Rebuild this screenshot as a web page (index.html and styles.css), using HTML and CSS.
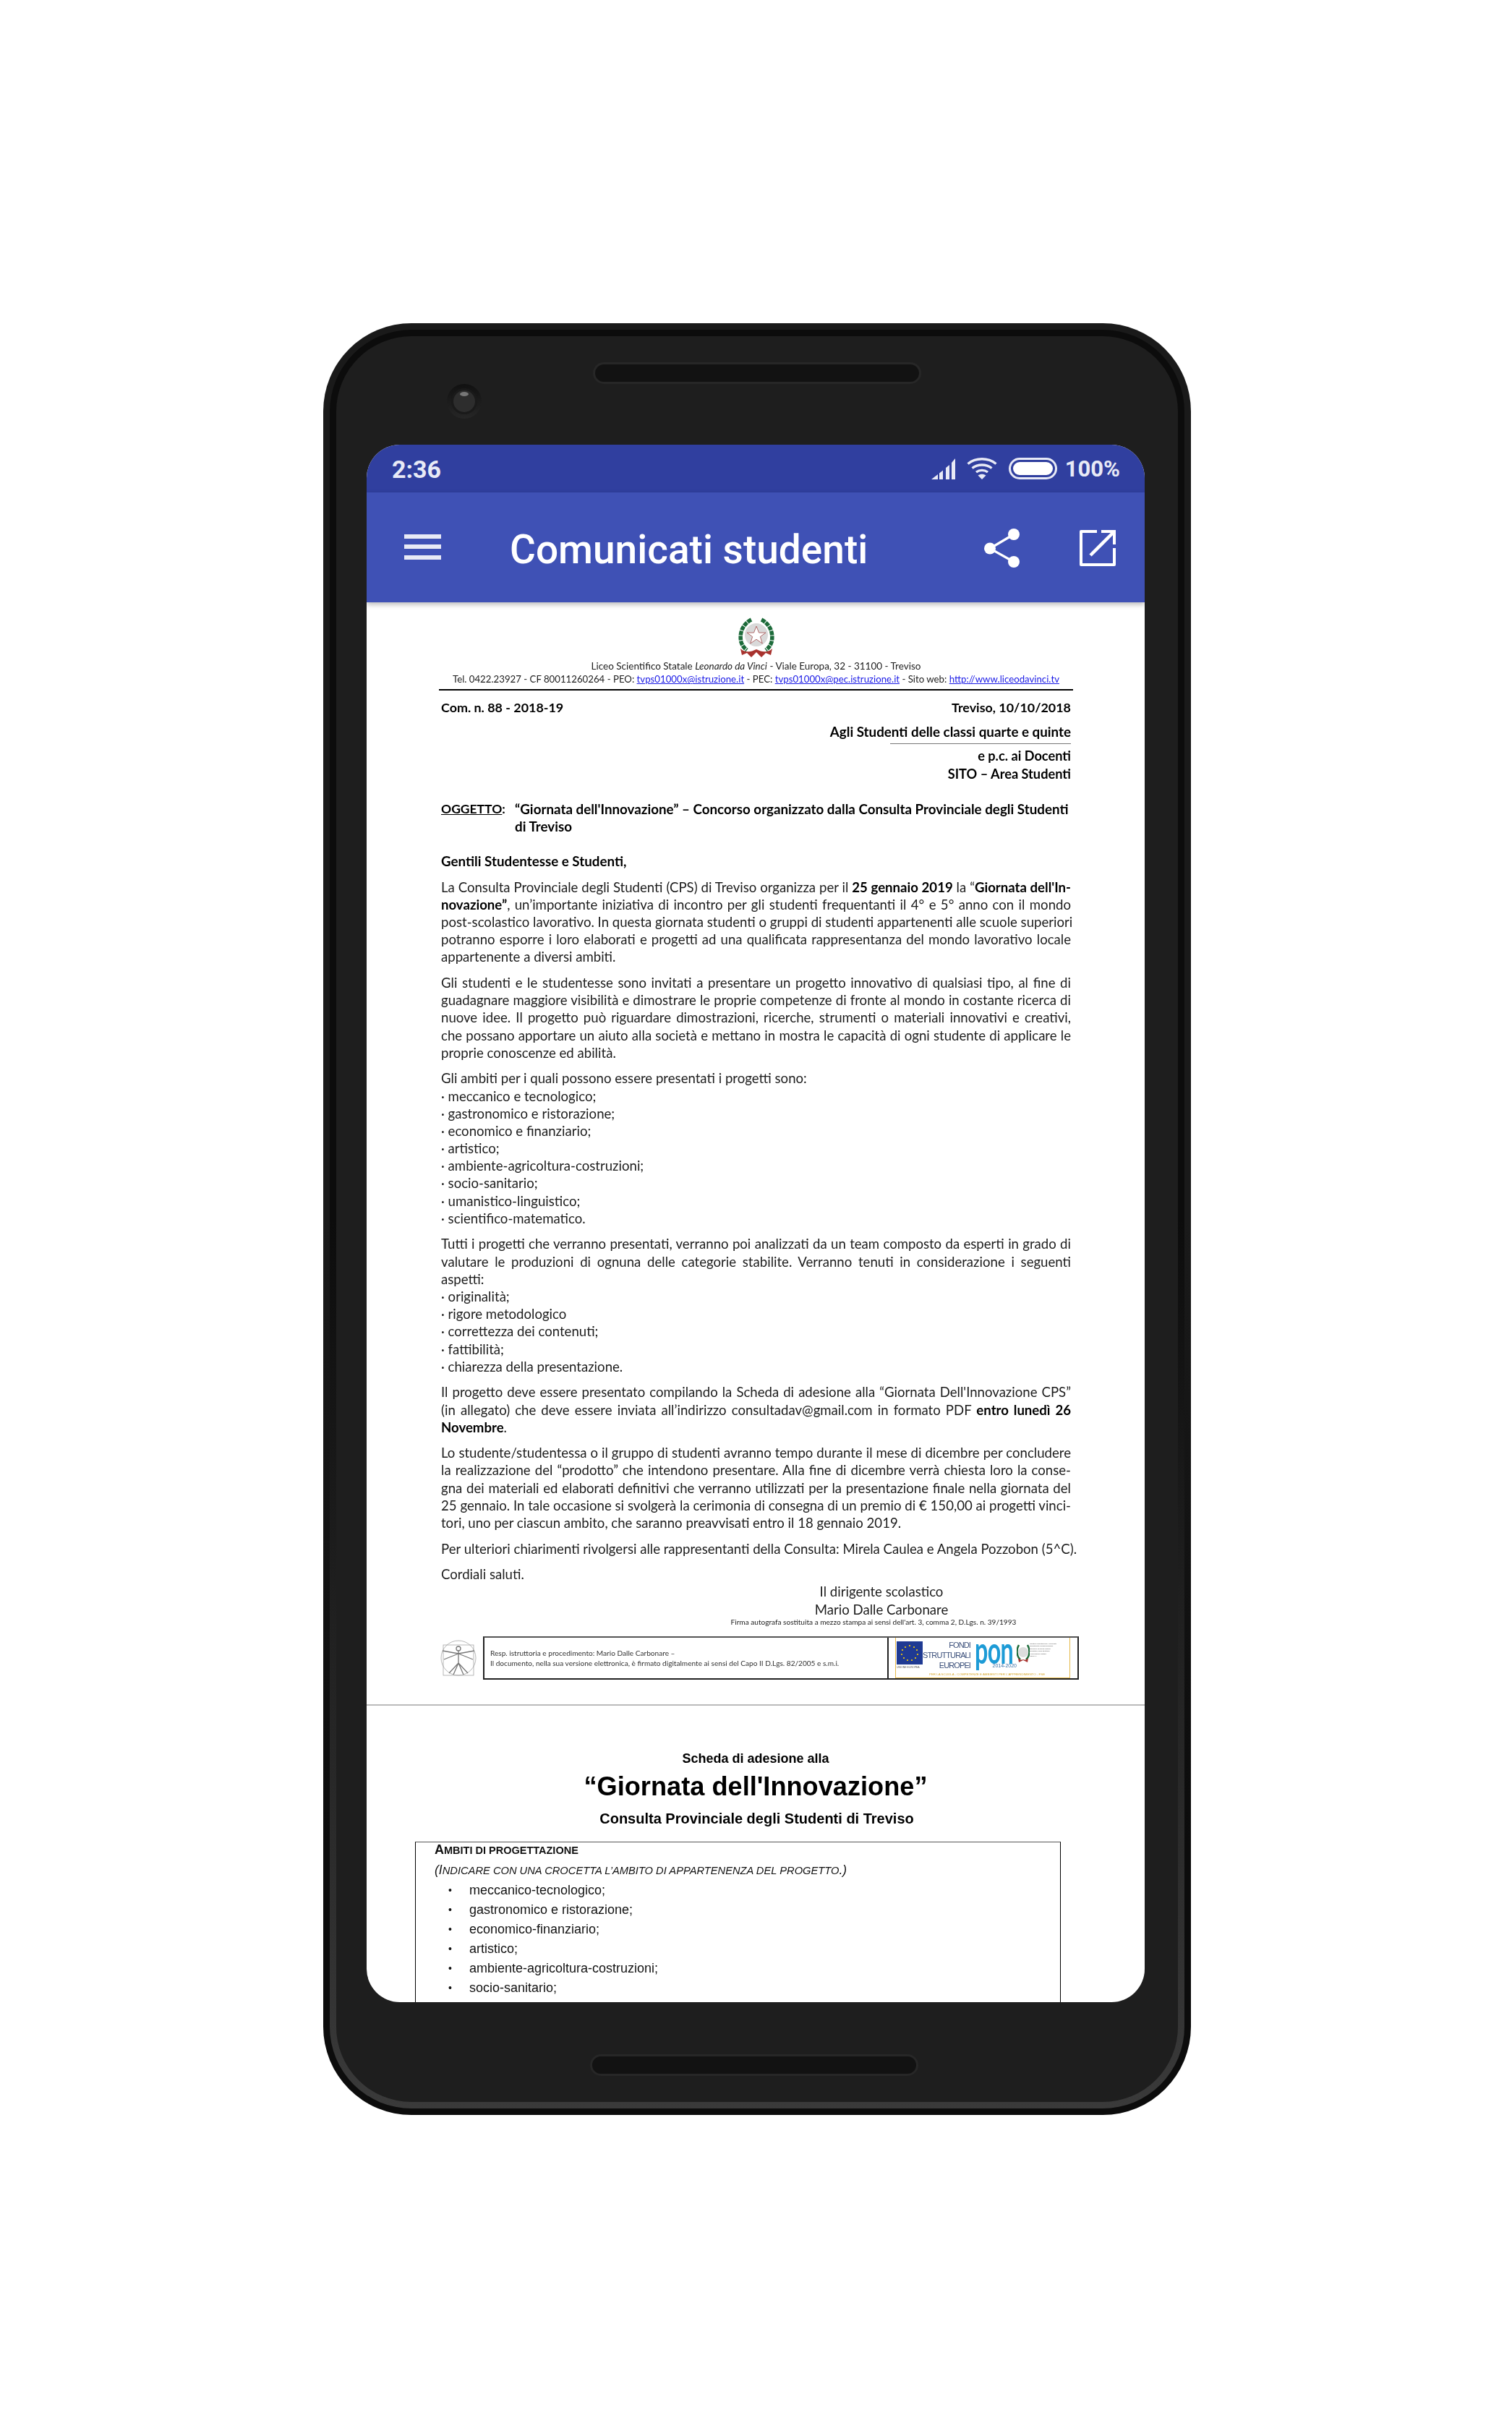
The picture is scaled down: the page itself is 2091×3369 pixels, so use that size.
FILE: index.html
```html
<!DOCTYPE html>
<html lang="it">
<head>
<meta charset="utf-8">
<title>Comunicati studenti</title>
<link rel="stylesheet" href="styles.css">
</head>
<body>
<div class="phone">
  <div class="phone-mid">
    <div class="phone-inner">
      <div class="bezel-top">
        <div class="camera"><div class="lens"></div></div>
        <div class="speaker"></div>
      </div>
      <div class="screen">
        <div class="statusbar">
          <span class="time">2:36</span>
          <div class="status-right">
            <svg class="ic-signal" viewBox="0 0 33 29"><path d="M0 29L9 22V29Z M11 20.500L16 16.500V29H11Z M20 13L25 9V29H20Z M28 6L33 0V29H28Z" fill="#e8eaf6"/></svg>
            <svg class="ic-wifi" viewBox="0 0 42 30"><g fill="none" stroke="#e8eaf6" stroke-width="3.400"><path d="M1.500 8.500C12.500-.5 29.500-.5 40.500 8.500"/><path d="M7.500 14.500C15 8.500 27 8.500 34.500 14.500"/><path d="M13 20C17.500 16.500 24.500 16.500 29 20"/></g><path d="M21 30L15.500 24.500C19 22 23 22 26.500 24.500Z" fill="#e8eaf6"/></svg>
            <div class="battery"><div class="battery-fill"></div></div>
            <span class="pct">100%</span>
          </div>
        </div>
        <div class="appbar">
          <div class="hamburger"><i></i><i></i><i></i></div>
          <h1 class="title">Comunicati studenti</h1>
          <svg class="ic-share" viewBox="0 0 50 54"><g fill="#fff"><circle cx="41" cy="8" r="8"/><circle cx="8" cy="27.500" r="8"/><circle cx="41" cy="46" r="8"/></g><path d="M41 8L8 27.500L41 46" fill="none" stroke="#fff" stroke-width="3.200"/></svg>
          <svg class="ic-open" viewBox="0 0 50 50"><path d="M24 2H2V48H48V25" fill="none" stroke="#fff" stroke-width="4" stroke-linejoin="round"/><path d="M15 35L46 4" stroke="#fff" stroke-width="4.500" fill="none"/><path d="M30 0H50V20H46V4H30Z" fill="#fff"/></svg>
        </div>
        <div class="doc">
          <div class="page">
            <svg class="emblem" viewBox="0 0 50 56">
              <circle cx="25" cy="24" r="16" fill="#d9d9d9"/>
              <path d="M25 12l3.500 9h9.500l-7.600 5.600 2.900 9.400-8.300-5.800-8.300 5.800 2.900-9.400L12 21h9.500z" fill="#fff" stroke="#b06a6a" stroke-width="1"/>
              <path d="M18 3C6 9 1 22 4 34c1.500 5 4 8 8 11" fill="none" stroke="#1d6b3a" stroke-width="5.500" stroke-dasharray="6 1"/>
              <path d="M32 3C44 9 49 22 46 34c-1.500 5-4 8-8 11" fill="none" stroke="#1d6b3a" stroke-width="5.500" stroke-dasharray="6 1"/>
              <path d="M3 43c6 6 14 5 22 1 8 4 16 5 22-1l-2 9-7-3-6 6-7-7-7 7-6-6-7 3z" fill="#a8322e"/>
            </svg>
            <div class="head-line">Liceo Scientifico Statale <em>Leonardo da Vinci</em> - Viale Europa, 32 - 31100 - Treviso</div>
            <div class="head-line head-contact">Tel. 0422.23927 - CF 80011260264 - PEO: <a>tvps01000x@istruzione.it</a> - PEC: <a>tvps01000x@pec.istruzione.it</a> - Sito web: <a>http://www.liceodavinci.tv</a></div>
            <div class="head-rule"></div>
            <div class="ln b split date-row"><span>Com. n. 88 - 2018-19</span><span>Treviso, 10/10/2018</span></div>
            <div class="ln b right gap-agli">Agli Studenti delle classi quarte e quinte</div>
            <div class="thin-rule"></div>
            <div class="ln b right small-b">e p.c. ai Docenti</div>
            <div class="ln b right small-b">SITO – Area Studenti</div>
            <div class="ln b split-obj gap-obj"><span class="obj-label"><u>OGGETTO</u>:</span><span class="obj-text">“Giornata dell'Innovazione” – Concorso organizzato dalla Consulta Provinciale degli Studenti</span></div>
            <div class="ln b obj-cont">di Treviso</div>
            <div class="ln b gap-gent">Gentili Studentesse e Studenti,</div>

            <div class="para">
              <div class="ln j">La Consulta Provinciale degli Studenti (CPS) di Treviso organizza per il <b>25 gennaio 2019</b> la “<b>Giornata dell'In-</b></div>
              <div class="ln j"><b>novazione”</b>, un’importante iniziativa di incontro per gli studenti frequentanti il 4° e 5° anno con il mondo</div>
              <div class="ln j">post-scolastico lavorativo. In questa giornata studenti o gruppi di studenti appartenenti alle scuole superiori</div>
              <div class="ln j">potranno esporre i loro elaborati e progetti ad una qualificata rappresentanza del mondo lavorativo locale</div>
              <div class="ln">appartenente a diversi ambiti.</div>
            </div>
            <div class="para">
              <div class="ln j">Gli studenti e le studentesse sono invitati a presentare un progetto innovativo di qualsiasi tipo, al fine di</div>
              <div class="ln j">guadagnare maggiore visibilità e dimostrare le proprie competenze di fronte al mondo in costante ricerca di</div>
              <div class="ln j">nuove idee. Il progetto può riguardare dimostrazioni, ricerche, strumenti o materiali innovativi e creativi,</div>
              <div class="ln j">che possano apportare un aiuto alla società e mettano in mostra le capacità di ogni studente di applicare le</div>
              <div class="ln">proprie conoscenze ed abilità.</div>
            </div>
            <div class="para">
              <div class="ln">Gli ambiti per i quali possono essere presentati i progetti sono:</div>
              <div class="ln">· meccanico e tecnologico;</div>
              <div class="ln">· gastronomico e ristorazione;</div>
              <div class="ln">· economico e finanziario;</div>
              <div class="ln">· artistico;</div>
              <div class="ln">· ambiente-agricoltura-costruzioni;</div>
              <div class="ln">· socio-sanitario;</div>
              <div class="ln">· umanistico-linguistico;</div>
              <div class="ln">· scientifico-matematico.</div>
            </div>
            <div class="para">
              <div class="ln j">Tutti i progetti che verranno presentati, verranno poi analizzati da un team composto da esperti in grado di</div>
              <div class="ln j">valutare le produzioni di ognuna delle categorie stabilite. Verranno tenuti in considerazione i seguenti</div>
              <div class="ln">aspetti:</div>
              <div class="ln">· originalità;</div>
              <div class="ln">· rigore metodologico</div>
              <div class="ln">· correttezza dei contenuti;</div>
              <div class="ln">· fattibilità;</div>
              <div class="ln">· chiarezza della presentazione.</div>
            </div>
            <div class="para">
              <div class="ln j">Il progetto deve essere presentato compilando la Scheda di adesione alla “Giornata Dell'Innovazione CPS”</div>
              <div class="ln j">(in allegato) che deve essere inviata all’indirizzo consultadav@gmail.com in formato PDF <b>entro lunedì 26</b></div>
              <div class="ln"><b>Novembre</b>.</div>
            </div>
            <div class="para">
              <div class="ln j">Lo studente/studentessa o il gruppo di studenti avranno tempo durante il mese di dicembre per concludere</div>
              <div class="ln j">la realizzazione del “prodotto” che intendono presentare. Alla fine di dicembre verrà chiesta loro la conse-</div>
              <div class="ln j">gna dei materiali ed elaborati definitivi che verranno utilizzati per la presentazione finale nella giornata del</div>
              <div class="ln j">25 gennaio. In tale occasione si svolgerà la cerimonia di consegna di un premio di € 150,00 ai progetti vinci-</div>
              <div class="ln">tori, uno per ciascun ambito, che saranno preavvisati entro il 18 gennaio 2019.</div>
            </div>
            <div class="para"><div class="ln">Per ulteriori chiarimenti rivolgersi alle rappresentanti della Consulta: Mirela Caulea e Angela Pozzobon (5^C).</div></div>
            <div class="para"><div class="ln">Cordiali saluti.</div></div>
            <div class="sign">
              <div class="ln sign-name">Il dirigente scolastico</div>
              <div class="ln sign-name">Mario Dalle Carbonare</div>
              <div class="sign-note">Firma autografa sostituita a mezzo stampa ai sensi dell'art. 3, comma 2, D.Lgs. n. 39/1993</div>
            </div>
            <div class="foot">
              <svg class="vitruvian" viewBox="0 0 50 50"><g fill="none" stroke="#999" stroke-width=".7"><rect x="4" y="7" width="42" height="42"/><circle cx="25" cy="25" r="24"/></g><g fill="none" stroke="#777" stroke-width="1.300"><circle cx="25" cy="12" r="3"/><path d="M25 15V32M25 32L18 48M25 32L32 48M25 32L12 46M25 32L38 46M25 19L3 15M25 19L47 15M25 19L5 27M25 19L45 27"/></g></svg>
              <div class="foot-box">
                <div class="foot-text">
                  <div>Resp. istruttoria e procedimento: Mario Dalle Carbonare –</div>
                  <div>Il documento, nella sua versione elettronica, è firmato digitalmente ai sensi del Capo II D.Lgs. 82/2005 e s.m.i.</div>
                </div>
                <div class="foot-logos">
                  <div class="logo-row">
                    <div class="logo-eu">
                      <svg class="eu-flag" viewBox="0 0 36 32"><rect width="36" height="32" fill="#1f3a93"/><g fill="#ffd200"><circle cx="18" cy="6" r="1.100"/><circle cx="24" cy="8" r="1.100"/><circle cx="28" cy="12" r="1.100"/><circle cx="29" cy="18" r="1.100"/><circle cx="26" cy="23" r="1.100"/><circle cx="21" cy="26" r="1.100"/><circle cx="15" cy="26" r="1.100"/><circle cx="10" cy="23" r="1.100"/><circle cx="7" cy="18" r="1.100"/><circle cx="8" cy="12" r="1.100"/><circle cx="12" cy="8" r="1.100"/></g></svg>
                      <span class="eu-label">UNIONE EUROPEA</span>
                    </div>
                    <div class="fondi"><span>FONDI</span><span>STRUTTURALI</span><span>EUROPEI</span></div>
                    <div class="pon"><span class="pon-word">pon</span><span class="pon-years">2014-2020</span></div>
                    <svg class="mini-emblem" viewBox="0 0 18 28"><circle cx="9" cy="12" r="7" fill="#ddd"/><path d="M3 2C-1 9 0 18 5 22M15 2C19 9 18 18 13 22" fill="none" stroke="#1d6b3a" stroke-width="2.500"/><path d="M2 20c3 3 5 3 7 2 2 1 4 1 7-2l-1 6-6-3-6 3z" fill="#a8322e"/></svg>
                    <div class="mini-text">
                      <span>Ministero dell'Istruzione, Università</span>
                      <span>Dipartimento Programmazione</span>
                      <span>Direzione Generale edilizia</span>
                      <span>scolastica, fondi strutturali</span>
                      <span>e innovazione digitale</span>
                      <span>Ufficio IV</span>
                    </div>
                  </div>
                  <div class="logo-foot">PER LA SCUOLA - COMPETENZE E AMBIENTI PER L'APPRENDIMENTO - FSE</div>
                </div>
              </div>
            </div>
          </div>
          <div class="sep"></div>
          <div class="sheet">
            <div class="sheet-sub">Scheda di adesione alla</div>
            <div class="sheet-title">“Giornata dell'Innovazione”</div>
            <div class="sheet-org">Consulta Provinciale degli Studenti di Treviso</div>
            <div class="sheet-table">
              <div class="sheet-h">A<span>MBITI DI PROGETTAZIONE</span></div>
              <div class="sheet-i">(I<span>NDICARE CON UNA CROCETTA L’AMBITO DI APPARTENENZA DEL PROGETTO</span>.)</div>
              <ul class="sheet-list">
                <li>meccanico-tecnologico;</li>
                <li>gastronomico e ristorazione;</li>
                <li>economico-finanziario;</li>
                <li>artistico;</li>
                <li>ambiente-agricoltura-costruzioni;</li>
                <li>socio-sanitario;</li>
                <li>umanistico-linguistico;</li>
              </ul>
            </div>
          </div>
        </div>
      </div>
      <div class="bezel-bottom"><div class="speaker"></div></div>
    </div>
  </div>
</div>
</body>
</html>
```

FILE: styles.css
```css
* { box-sizing: border-box; }
html, body { margin: 0; padding: 0; background: #fff; }
body { height: 3369px; padding: 447px 0 0 447px; overflow: hidden; font-family: "Lato", sans-serif; }

.phone { width: 1200px; height: 2478px; padding: 9px; border-radius: 122px; background: linear-gradient(#1a1a1a 0, #1a1a1a 50%, #0c0c0c 85%, #0c0c0c 100%); }
.phone-mid { height: 100%; padding: 9px; border-radius: 113px; background: linear-gradient(#0c0c0c 0, #0c0c0c 50%, #2b2b2b 85%, #3a3a3a 100%); }
.phone-inner { height: 100%; border-radius: 104px; background: #1e1e1e; padding: 0 42px; display: flex; flex-direction: column; }

.bezel-top { position: relative; height: 150px; padding-top: 36px; flex: none; }
.speaker { width: 454px; height: 30px; margin: 0 auto; border-radius: 15px; background: #121212; border: 3px solid #272727; }
.camera { position: absolute; left: 111px; top: 66px; width: 48px; height: 48px; border-radius: 50%; background: linear-gradient(#111, #262626); display: flex; align-items: center; justify-content: center; }
.lens { position: relative; width: 30px; height: 30px; border-radius: 50%; background: #2d2d2d; box-shadow: 0 0 0 3px #1a1a1a; }
.lens::after { content: ""; position: absolute; left: 9px; top: 2px; width: 12px; height: 6px; border-radius: 50%; background: #777; }
.bezel-bottom { flex: 1; padding-top: 72px; }
.bezel-bottom .speaker { transform: translateX(-4px); }

.screen { width: 1076px; height: 2154px; flex: none; border-radius: 46px; overflow: hidden; background: #fff; display: flex; flex-direction: column; }
.statusbar { height: 66px; flex: none; background: #303f9f; display: flex; align-items: center; justify-content: space-between; padding: 0 34px 0 35px; color: #e8eaf6; font-family: "Roboto", sans-serif; font-weight: 700; }
.time { font-size: 34px; line-height: 1; margin-top: 1px; }
.status-right { display: flex; align-items: center; }
.ic-signal { width: 33px; height: 29px; display: block; }
.ic-wifi { width: 42px; height: 30px; margin-left: 16px; display: block; }
.battery { width: 67px; height: 30px; margin-left: 16px; border: 3px solid #e8eaf6; border-radius: 15px; padding: 3px; }
.battery-fill { height: 100%; background: #fff; border-radius: 9px; }
.pct { font-size: 31px; line-height: 1; margin-left: 11px; }

.appbar { position: relative; z-index: 2; height: 152px; flex: none; background: #3f51b5; display: flex; align-items: center; padding: 0 40px 0 52px; box-shadow: 0 3px 7px rgba(0, 0, 0, .28); color: #fff; }
.hamburger { width: 51px; height: 35px; display: flex; flex-direction: column; justify-content: space-between; margin-top: -2px; flex: none; }
.hamburger i { display: block; height: 6px; background: #e8eaf6; }
.title { margin: 7px 0 0 95px; flex: 1; font: 500 55px/1 "Roboto", sans-serif; color: #fff; }
.ic-share { width: 50px; height: 54px; flex: none; margin-top: 2px; }
.ic-open { width: 50px; height: 50px; flex: none; margin: 2px 0 0 82px; }

.doc { flex: 1; min-height: 0; overflow: hidden; color: #1c1c1c; font-size: 18.600px; filter: blur(.35px); }
.page { padding: 21px 102px 0 103px; }
.emblem { display: block; width: 50px; height: 56px; margin: 0 auto; }
.head-line { height: 18px; line-height: 18px; font-size: 13.500px; text-align: center; white-space: nowrap; margin-top: 2px; }
.head-line + .head-line { margin-top: 0; }
.head-contact { font-size: 13.230px; }
.head-line a { color: #1a1ae6; text-decoration: underline; }
.head-rule { height: 2px; background: #000; margin: 5px -3px 0; }
.ln { height: 24.200px; line-height: 24.200px; white-space: nowrap; }
.b { font-weight: 700; color: #000; font-size: 18.800px; }
.ln b { font-weight: 700; color: #000; }
.ln.j { text-align: justify; text-align-last: justify; }
.split { display: flex; justify-content: space-between; }
.date-row { font-size: 17.900px; margin-top: 11px; }
.small-b { font-size: 18.200px; }
.right { text-align: right; }
.gap-agli { margin-top: 10px; }
.thin-rule { height: 1px; width: 250px; margin: 4px 0 4px auto; background: #777; }
.split-obj { display: flex; }
.obj-label { width: 102px; flex: none; font-size: 17.500px; }
.gap-obj { margin-top: 25px; }
.obj-cont { padding-left: 102px; }
.gap-gent { margin-top: 24px; }
.para { margin-top: 11.400px; }
.sign { padding-top: 0; }
.sign-name { padding-left: 347px; text-align: center; }
.sign-note { height: 10px; line-height: 10px; font-size: 10.100px; padding-left: 325px; text-align: center; white-space: nowrap; }

.foot { display: flex; align-items: center; margin: 15px -11px 0 -1px; height: 60px; }
.vitruvian { width: 50px; height: 50px; flex: none; }
.foot-box { flex: 1; margin-left: 9px; height: 60px; border: 2px solid #222; border-top-color: #555; display: flex; }
.foot-text { width: 559px; flex: none; padding-left: 8px; border-right: 2px solid #222; font-size: 10.100px; line-height: 14px; display: flex; flex-direction: column; justify-content: center; white-space: nowrap; color: #333; }
.foot-logos { flex: 1; margin: 0 10px 0 9px; padding: 0 0 0 1px; border: 1px solid #e5b94a; border-width: 0 1px 1px; display: flex; flex-direction: column; font-family: "Liberation Sans", sans-serif; }
.logo-row { display: flex; flex: 1; min-height: 0; }
.logo-eu { width: 36px; flex: none; display: flex; flex-direction: column; padding-top: 5px; }
.eu-flag { width: 36px; height: 32px; display: block; }
.eu-label { font-size: 3.500px; line-height: 8px; white-space: nowrap; color: #555; }
.fondi { width: 66px; flex: none; display: flex; flex-direction: column; align-items: flex-end; font-size: 11px; line-height: 14px; color: #3b4f7a; white-space: nowrap; letter-spacing: -.9px; padding-top: 3px; }
.pon { width: 64px; flex: none; padding-left: 6px; display: flex; flex-direction: column; align-items: flex-start; }
.pon-word { display: block; font: 700 52px/32px "Lato", sans-serif; color: #1d9bd6; transform: scaleX(.62); transform-origin: left top; letter-spacing: -1px; }
.pon-years { font-size: 7px; line-height: 8px; color: #3b6ea5; align-self: flex-end; margin-top: 3px; }
.mini-emblem { width: 18px; height: 28px; flex: none; margin-top: 8px; }
.mini-text { flex: 1; min-width: 0; display: flex; flex-direction: column; padding-top: 7px; font-size: 2.400px; line-height: 3.500px; white-space: nowrap; color: #444; }
.mini-text span { display: block; }
.logo-foot { height: 9px; font-size: 4.400px; line-height: 9px; color: #d9a92e; padding-left: 45px; white-space: nowrap; }

.sep { height: 2px; background: #bbb; margin-top: 34px; }
.sheet { font-family: "Liberation Sans", sans-serif; color: #000; text-align: center; padding-top: 61px; }
.sheet-sub { font-size: 18px; font-weight: 700; line-height: 24px; }
.sheet-title { font-size: 36.200px; font-weight: 700; line-height: 44px; margin-top: 5px; }
.sheet-org { font-size: 20px; font-weight: 700; line-height: 24px; margin-top: 10px; padding-left: 3px; }
.sheet-table { width: 893px; margin: 20px 0 0 67px; border: 1.500px solid #000; border-top-color: #555; border-bottom: 0; padding: 0 0 0 26px; text-align: left; color: #111; }
.sheet-h { font-size: 18px; font-weight: 700; line-height: 20px; }
.sheet-h span { font-size: 14.500px; }
.sheet-i { font-size: 17.500px; font-style: italic; line-height: 20px; margin-top: 7px; }
.sheet-i span { font-size: 14.700px; }
.sheet-list { list-style: none; margin: 4px 0 0; padding: 0 0 0 19px; font-size: 18px; line-height: 27px; }
.sheet-list li { height: 27.100px; display: flex; }
.sheet-list li::before { content: "•"; width: 29px; flex: none; font-size: 14px; }
```
